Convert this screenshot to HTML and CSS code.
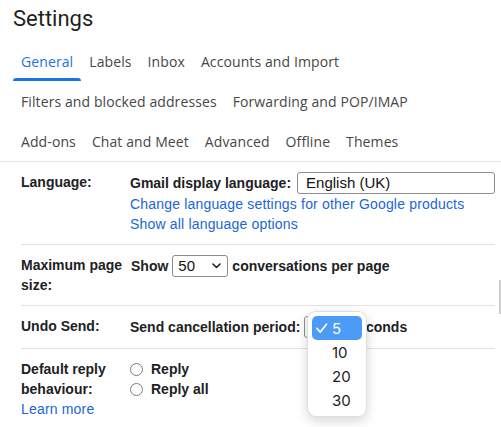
FILE: index.html
```html
<!DOCTYPE html>
<html lang="en">
<head>
<meta charset="utf-8">
<title>Settings</title>
<link rel="stylesheet" href="styles.css">
</head>
<body>
<div class="page">
  <h1 class="title">Settings</h1>
  <nav class="tabs">
    <div class="tab-row">
      <span class="tab active">General</span>
      <span class="tab">Labels</span>
      <span class="tab">Inbox</span>
      <span class="tab">Accounts and Import</span>
    </div>
    <div class="tab-row">
      <span class="tab">Filters and blocked addresses</span>
      <span class="tab">Forwarding and POP/IMAP</span>
    </div>
    <div class="tab-row">
      <span class="tab">Add-ons</span>
      <span class="tab">Chat and Meet</span>
      <span class="tab">Advanced</span>
      <span class="tab">Offline</span>
      <span class="tab">Themes</span>
    </div>
  </nav>

  <div class="sections">
    <div class="section">
      <div class="label">Language:</div>
      <div class="value">
        <div class="line ctl gap-lang"><span class="strong">Gmail display language:</span><span class="select select-lang">English (UK)</span></div>
        <div class="line"><a class="link" href="#">Change language settings for other Google products</a></div>
        <div class="line"><a class="link" href="#">Show all language options</a></div>
      </div>
    </div>

    <div class="section">
      <div class="label">Maximum page size:</div>
      <div class="value">
        <div class="line ctl"><span class="strong show">Show</span><span class="select select-num">50<svg class="chev" width="9" height="6" viewBox="0 0 9 6"><path d="M1 1l3.5 3.5L8 1" fill="none" stroke="#222" stroke-width="1.6" stroke-linecap="round" stroke-linejoin="round"/></svg></span><span class="strong">conversations per page</span></div>
      </div>
    </div>

    <div class="section">
      <div class="label">Undo Send:</div>
      <div class="value">
        <div class="line ctl"><span class="strong">Send cancellation period:</span><span class="select select-undo">5</span><span class="strong">seconds</span></div>
      </div>
    </div>

    <div class="section">
      <div class="label">Default reply behaviour:<br><a class="link normal" href="#">Learn more</a></div>
      <div class="value">
        <div class="line radio-line"><span class="radio"></span><span class="strong">Reply</span></div>
        <div class="line radio-line"><span class="radio"></span><span class="strong">Reply all</span></div>
      </div>
    </div>
  </div>

  <div class="popup">
    <div class="menu-item selected"><svg class="check" width="12" height="11" viewBox="0 0 12 11"><path d="M1 5.5l3.3 3.6L10.5 1.2" fill="none" stroke="#fff" stroke-width="1.7" stroke-linecap="round" stroke-linejoin="round"/></svg>5</div>
    <div class="menu-item">10</div>
    <div class="menu-item">20</div>
    <div class="menu-item">30</div>
  </div>
  <div class="scroll-thumb"></div>
</div>
</body>
</html>
```

FILE: styles.css
```css
body {
  margin: 0;
  background: #fff;
  font-family: "Liberation Sans", Arial, sans-serif;
  color: #202124;
}

.page {
  position: relative;
  width: 501px;
  height: 427px;
  overflow: hidden;
}

.title {
  margin: 0;
  height: 41px;
  box-sizing: border-box;
  padding: 5px 0 0 13px;
  font-family: Roboto, "Open Sans", sans-serif;
  font-size: 22px;
  font-weight: 400;
  line-height: 28px;
  color: #1f1f1f;
}

.tabs {
  padding-left: 13px;
  border-bottom: 1px solid #e3e3e3;
}

.tab-row {
  display: flex;
  height: 40px;
}

.tab {
  position: relative;
  display: flex;
  align-items: center;
  padding: 0 8px;
  font-family: "Open Sans", Roboto, sans-serif;
  font-size: 14px;
  letter-spacing: 0.1px;
  color: #474747;
  white-space: nowrap;
}

.tab.active {
  color: #1a73e8;
}

.tab.active::after {
  content: "";
  position: absolute;
  left: 0;
  right: 0;
  bottom: 0;
  height: 3px;
  border-radius: 3px 3px 0 0;
  background: #1a73e8;
}

.section {
  display: flex;
  margin: 0 6px 0 21px;
  padding: 10px 0;
  border-bottom: 1px solid #e3e3e3;
}

.section:last-child {
  border-bottom: none;
}

.label {
  flex: none;
  width: 109px;
  font-size: 14px;
  font-weight: 700;
  line-height: 20px;
  color: #202124;
}

.value {
  flex: 1;
  min-width: 0;
  font-size: 14px;
  line-height: 20px;
}

.line {
  display: flex;
  align-items: center;
  gap: 4px;
  height: 20px;
  white-space: nowrap;
}

.line.ctl {
  height: 22px;
}

.line.gap-lang {
  gap: 6px;
}

.strong {
  font-weight: 700;
}

.show {
  margin-left: 1px;
}

.link {
  color: #1a66d9;
  text-decoration: none;
  letter-spacing: 0.18px;
}

.link.normal {
  font-weight: 400;
}

.select {
  flex: none;
  box-sizing: border-box;
  display: flex;
  align-items: center;
  justify-content: space-between;
  height: 22px;
  padding: 0 6px 0 8px;
  border: 1px solid #8c8c8c;
  border-radius: 3px;
  background: #fff;
  font-size: 15px;
  color: #111;
}

.select-lang {
  flex: 1;
}

.select-num {
  width: 56px;
  padding-left: 5px;
}

.select-undo {
  width: 42px;
}

.radio-line {
  gap: 8px;
}

.radio {
  flex: none;
  box-sizing: border-box;
  width: 13px;
  height: 13px;
  border: 1px solid #7a7a7a;
  border-radius: 50%;
}

.popup {
  position: absolute;
  left: 307px;
  top: 311px;
  width: 60px;
  height: 106px;
  box-sizing: border-box;
  padding: 4px;
  background: #fff;
  border: 1px solid rgba(0, 0, 0, 0.13);
  border-radius: 9px;
  box-shadow: 0 4px 12px rgba(0, 0, 0, 0.16);
}

.menu-item {
  position: relative;
  display: flex;
  align-items: center;
  height: 24px;
  padding-left: 20px;
  border-radius: 5px;
  font-family: Inter, "Noto Sans", sans-serif;
  font-size: 15px;
  color: #222;
}

.menu-item.selected {
  background: #4b9bf7;
  color: #fff;
}

.check {
  position: absolute;
  left: 4px;
  top: 7px;
}

.scroll-thumb {
  position: absolute;
  right: 0;
  top: 280px;
  width: 2px;
  height: 34px;
  background: #cfcfcf;
}
```
